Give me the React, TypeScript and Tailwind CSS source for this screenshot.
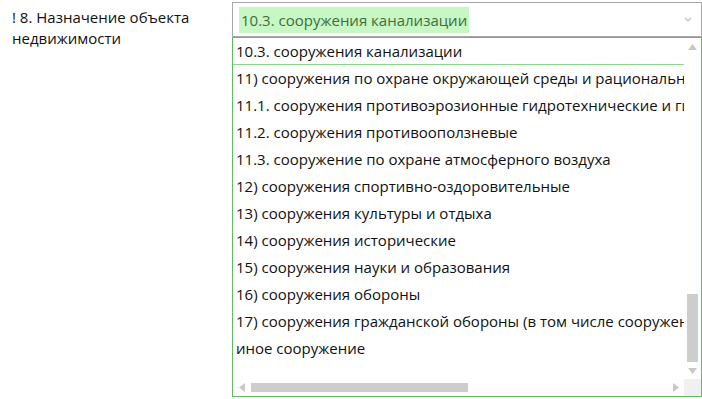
const items = [
  "10.3. сооружения канализации",
  "11) сооружения по охране окружающей среды и рационального использования природных ресурсов",
  "11.1. сооружения противоэрозионные гидротехнические и гидромелиоративные",
  "11.2. сооружения противооползневые",
  "11.3. сооружение по охране атмосферного воздуха",
  "12) сооружения спортивно-оздоровительные",
  "13) сооружения культуры и отдыха",
  "14) сооружения исторические",
  "15) сооружения науки и образования",
  "16) сооружения обороны",
  "17) сооружения гражданской обороны (в том числе сооружения двойного назначения)",
  "иное сооружение",
];

const App = () => {
  return (
    <div
      className="flex w-[702px] h-[399px] bg-white text-[#111] overflow-hidden"
      style={{ fontFamily: '"Open Sans", "Noto Sans", sans-serif' }}
    >
      {/* Label */}
      <div className="w-[232px] shrink-0 pl-[12px] pt-[7px] pr-4 text-[15px] leading-[21px]">
        ! 8. Назначение объекта недвижимости
      </div>

      {/* Select + dropdown */}
      <div className="w-[470px] shrink-0 pt-[2px] flex flex-col">
        <div className="h-[35px] border border-[#a8a8a8] flex items-center pl-[6px] pr-[6px]">
          <span className="bg-[#c7f7c3] text-[#3f6e3f] text-[15px] leading-[26px] px-[2px] whitespace-nowrap">
            10.3. сооружения канализации
          </span>
          <div className="flex-1" />
          <svg width="8" height="5" viewBox="0 0 8 5" className="mr-[3px]">
            <path d="M1 1 L4 4 L7 1" fill="none" stroke="#b8b8b8" strokeWidth="1.1" />
          </svg>
        </div>

        <div className="h-[360px] border border-[#5cbf5c] flex flex-col">
          <div className="flex flex-1 min-h-0">
            <div className="flex-1 overflow-hidden text-[15px]">
              {items.map((it, i) => (
                <div
                  key={i}
                  className={
                    i === 0
                      ? "h-[27px] leading-[26px] pl-[3px] whitespace-nowrap border-b border-[#8fd88f]"
                      : "h-[27px] leading-[27px] pl-[3px] whitespace-nowrap"
                  }
                >
                  {it}
                </div>
              ))}
            </div>
            {/* Vertical scrollbar */}
            <div className="w-[17px] shrink-0 flex flex-col items-center">
              <div className="h-[17px] flex items-center justify-center">
                <svg width="9" height="6" viewBox="0 0 9 6">
                  <path d="M0 6 L4.5 0 L9 6 Z" fill="#c8c8c8" />
                </svg>
              </div>
              <div className="flex-1 w-full flex flex-col justify-end px-[3px]">
                <div className="h-[68px] bg-[#cdcdcd]" />
              </div>
              <div className="h-[17px] flex items-center justify-center">
                <svg width="9" height="6" viewBox="0 0 9 6">
                  <path d="M0 0 L4.5 6 L9 0 Z" fill="#c8c8c8" />
                </svg>
              </div>
            </div>
          </div>
          {/* Horizontal scrollbar */}
          <div className="h-[17px] shrink-0 flex items-center">
            <div className="w-[17px] h-full flex items-center justify-center">
              <svg width="6" height="9" viewBox="0 0 6 9">
                <path d="M6 0 L0 4.5 L6 9 Z" fill="#c8c8c8" />
              </svg>
            </div>
            <div className="flex-1 h-full flex items-center pl-[1px]">
              <div className="w-[217px] h-[9px] bg-[#cdcdcd]" />
            </div>
            <div className="w-[17px] h-full flex items-center justify-center">
              <svg width="6" height="9" viewBox="0 0 6 9">
                <path d="M0 0 L6 4.5 L0 9 Z" fill="#c8c8c8" />
              </svg>
            </div>
            <div className="w-[17px] h-full bg-[#f0f0f0]" />
          </div>
        </div>
      </div>
    </div>
  );
};

export default App;
